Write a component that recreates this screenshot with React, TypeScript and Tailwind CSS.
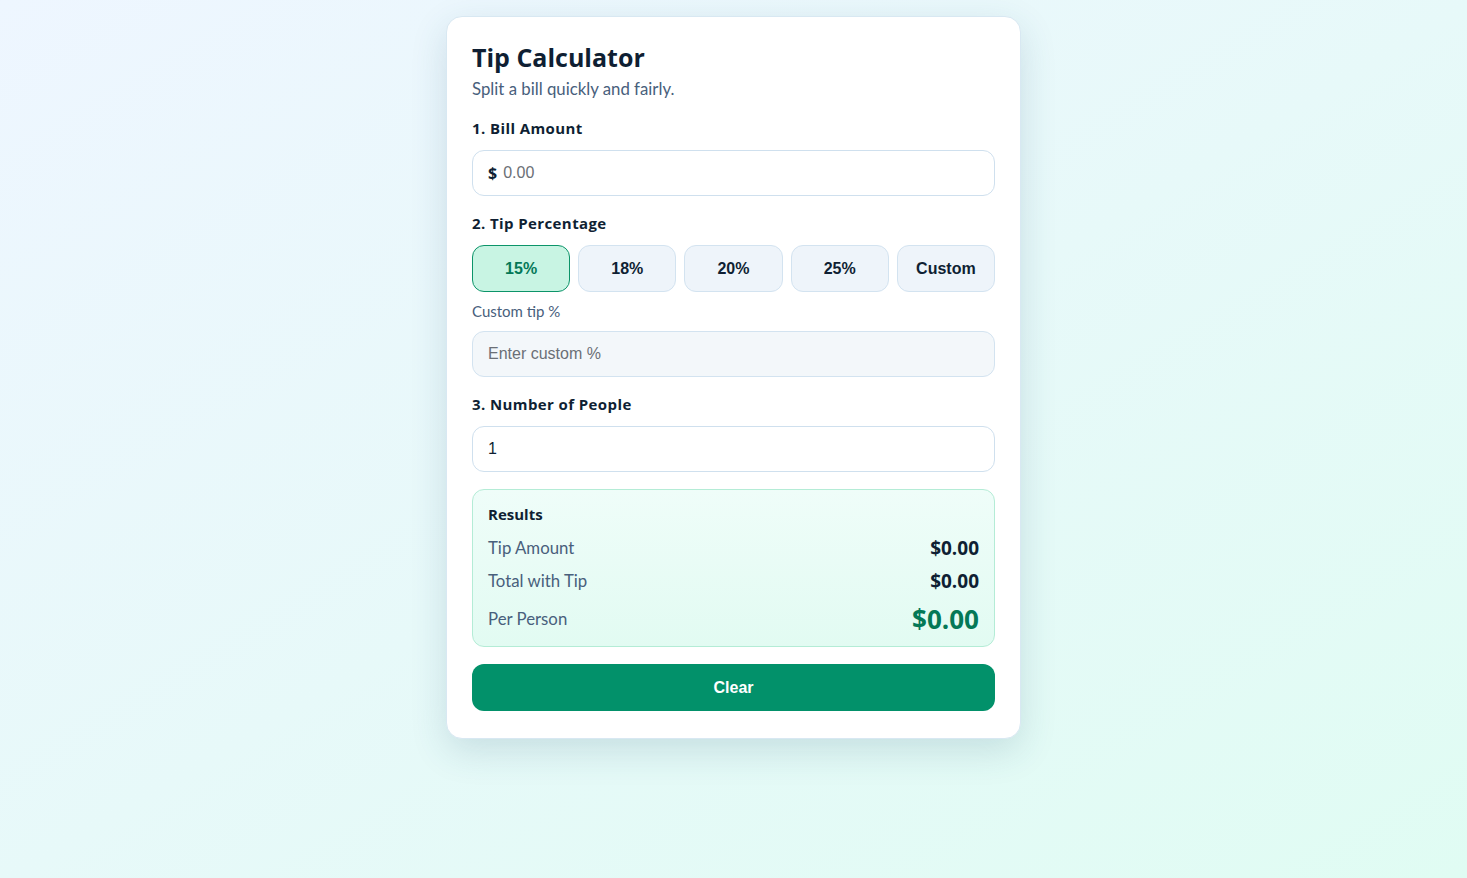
import React, { useState } from "react";

const presets = ["15%", "18%", "20%", "25%", "Custom"];

const heading = "font-['Open_Sans','Lato',sans-serif] font-bold text-[#0f1f33]";
const field = "font-['Liberation_Sans',Arial,sans-serif] text-[16px]";
const stepLabel = `mb-3 text-[15px] leading-5 tracking-[0.4px] ${heading}`;

export default function App() {
  const [active, setActive] = useState("15%");
  const [bill, setBill] = useState("");
  const [custom, setCustom] = useState("");
  const [people, setPeople] = useState("1");

  const pct =
    active === "Custom" ? parseFloat(custom) || 0 : parseFloat(active) || 0;
  const billNum = parseFloat(bill) || 0;
  const tip = (billNum * pct) / 100;
  const total = billNum + tip;
  const n = Math.max(1, parseInt(people) || 1);
  const fmt = (v: number) => `$${v.toFixed(2)}`;

  return (
    <div className="min-h-[878px] w-full bg-gradient-to-br from-[#eef6ff] to-[#e0fcf3] font-['Lato','Noto_Sans',sans-serif]">
      <div className="flex justify-center pt-4">
        <div className="flex w-[575px] flex-col rounded-2xl border border-[#d8e8f2] bg-white px-[25px] pt-6 pb-[27px] shadow-[0_12px_36px_rgba(40,90,120,0.16)]">
          <h1 className={`text-[25px] leading-8 ${heading}`}>Tip Calculator</h1>
          <p className="mt-1 text-[16.8px] leading-6 text-[#48607c]">
            Split a bill quickly and fairly.
          </p>

          <label className={`mt-[17px] ${stepLabel}`}>1. Bill Amount</label>
          <div className="flex h-[46px] items-center rounded-xl border border-[#cfe0ee] bg-white px-[15px]">
            <span className={`mr-[6px] text-[16px] ${heading}`}>$</span>
            <input
              value={bill}
              onChange={(e) => setBill(e.target.value)}
              placeholder="0.00"
              className={`w-full bg-transparent ${field} text-[#0f1f33] outline-none placeholder:text-[#6b6f76]`}
            />
          </div>

          <label className={`mt-[17px] ${stepLabel}`}>2. Tip Percentage</label>
          <div className="grid grid-cols-5 gap-2">
            {presets.map((p) => {
              const on = p === active;
              return (
                <button
                  key={p}
                  onClick={() => setActive(p)}
                  className={
                    on
                      ? `h-[47px] rounded-xl border border-[#0c9469] bg-[#c8f4e3] ${field} font-bold text-[#047857]`
                      : `h-[47px] rounded-xl border border-[#d3e3f0] bg-[#eef4fa] ${field} font-bold text-[#0f1f33]`
                  }
                >
                  {p}
                </button>
              );
            })}
          </div>

          <label className="mt-[9px] mb-[10px] text-[15px] leading-5 text-[#48607c]">
            Custom tip %
          </label>
          <input
            value={custom}
            onChange={(e) => setCustom(e.target.value)}
            placeholder="Enter custom %"
            className={`h-[46px] rounded-xl border border-[#d3e3f0] bg-[#f3f7fa] px-[15px] ${field} text-[#0f1f33] outline-none placeholder:text-[#6b6f76]`}
          />

          <label className={`mt-[17px] ${stepLabel}`}>3. Number of People</label>
          <input
            value={people}
            onChange={(e) => setPeople(e.target.value)}
            className={`h-[46px] rounded-xl border border-[#cfe0ee] bg-white px-[15px] ${field} text-[#0f1f33] outline-none`}
          />

          <div className="mt-[17px] flex flex-col rounded-xl border border-[#b4ecd6] bg-gradient-to-b from-[#effdf9] to-[#e2fbf2] px-[15px] pt-[14px] pb-[11px]">
            <div className={`text-[15px] leading-5 ${heading}`}>Results</div>
            <div className="mt-3 flex h-6 items-center justify-between">
              <span className="text-[16.8px] text-[#48607c]">Tip Amount</span>
              <span className={`text-[19px] ${heading}`}>{fmt(tip)}</span>
            </div>
            <div className="mt-[9px] flex h-6 items-center justify-between">
              <span className="text-[16.8px] text-[#48607c]">Total with Tip</span>
              <span className={`text-[19px] ${heading}`}>{fmt(total)}</span>
            </div>
            <div className="mt-[10px] flex h-8 items-center justify-between">
              <span className="text-[16.8px] text-[#48607c]">Per Person</span>
              <span className="font-['Open_Sans','Lato',sans-serif] text-[26px] font-bold text-[#047857]">
                {fmt(total / n)}
              </span>
            </div>
          </div>

          <button
            onClick={() => {
              setBill("");
              setCustom("");
              setPeople("1");
              setActive("15%");
            }}
            className={`mt-[17px] h-[47px] rounded-xl bg-[#02916a] ${field} font-bold text-white`}
          >
            Clear
          </button>
        </div>
      </div>
    </div>
  );
}
